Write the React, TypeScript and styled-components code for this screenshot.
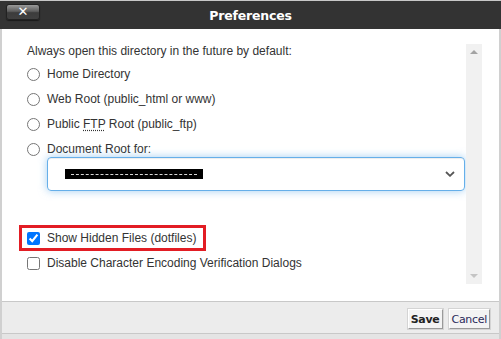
import React, { useState } from "react";
import styled, { createGlobalStyle } from "styled-components";

const GlobalStyle = createGlobalStyle`
  html, body {
    margin: 0;
    padding: 0;
    background: #fff;
  }
  body {
    font-family: "Liberation Sans", Arial, sans-serif;
  }
`;

const Dialog = styled.div`
  width: 501px;
  height: 339px;
  display: flex;
  flex-direction: column;
  background: #e4e4e4;
  box-sizing: border-box;
`;

const Header = styled.div`
  height: 28px;
  border-top: 1px solid #c8c8c8;
  background: #333;
  display: flex;
  align-items: center;
  justify-content: center;
  position: relative;
`;

const Title = styled.h1`
  margin: 0;
  color: #fff;
  font-family: "DejaVu Sans", Verdana, sans-serif;
  font-size: 12.5px;
  font-weight: bold;
  letter-spacing: -0.2px;
`;

const CloseButton = styled.button`
  position: absolute;
  left: 6px;
  top: 3px;
  width: 34px;
  height: 16px;
  padding: 0;
  border: 1px solid #222;
  border-radius: 3px;
  background: linear-gradient(#9a9a9a 0%, #5e5e5e 45%, #3c3c3c 55%, #404040 100%);
  box-shadow: 0 1px 1px rgba(0, 0, 0, 0.5);
  color: #fff;
  font-family: "DejaVu Sans", sans-serif;
  font-weight: bold;
  font-size: 13px;
  line-height: 14px;
  cursor: pointer;
`;

const Frame = styled.div`
  flex: 1;
  display: flex;
  flex-direction: column;
  border-left: 2px solid #d0d0d0;
  border-right: 2px solid #d0d0d0;
`;

const Body = styled.div`
  height: 272px;
  display: flex;
  background: #fff;
`;

const Content = styled.div`
  flex: 1;
  padding: 15px 0 0 25px;
  display: flex;
  flex-direction: column;
  gap: 7px;
  color: #333;
  font-size: 12px;
`;

const Lead = styled.p`
  margin: 0;
  height: 14px;
  line-height: 14px;
`;

const Row = styled.label`
  height: 18px;
  display: flex;
  align-items: center;
  gap: 7px;
  line-height: 14px;
`;

const Radio = styled.input.attrs({ type: "radio" })`
  margin: 0;
  width: 13px;
  height: 13px;
`;

const Check = styled.input.attrs({ type: "checkbox" })`
  margin: 0;
  width: 13px;
  height: 13px;
`;

const Abbr = styled.abbr`
  text-decoration: underline dotted;
  text-underline-offset: 2px;
`;

const DocGroup = styled.div`
  display: flex;
  flex-direction: column;
`;

const SelectBox = styled.div`
  margin: -1px 1px 0 20px;
  height: 34px;
  box-sizing: border-box;
  border: 1px solid #66afe9;
  border-radius: 4px;
  box-shadow: inset 0 1px 1px rgba(0, 0, 0, 0.075), 0 0 8px rgba(102, 175, 233, 0.6);
  display: flex;
  align-items: center;
  justify-content: space-between;
  padding: 0 9px 0 17px;
`;

const Redacted = styled.span`
  width: 138px;
  height: 10px;
  background: #000;
  display: flex;
  align-items: center;
  padding: 0 6px;
  box-sizing: border-box;
  &::after {
    content: "";
    flex: 1;
    border-top: 1px dashed #d8d8d8;
  }
`;

const Spacer = styled.div`
  height: 20px;
`;

const Highlight = styled.div`
  align-self: flex-start;
  margin-left: -8px;
  border: 3px solid #e21d24;
  padding: 1px 7px 1px 5px;
  margin-bottom: -4px;
`;

const ScrollTrack = styled.div`
  width: 16px;
  margin: 15px 17px 17px 0;
  background: #f1f1f1;
  display: flex;
  flex-direction: column;
  justify-content: space-between;
  align-items: center;
  padding: 6px 0;
  box-sizing: border-box;
`;

const Arrow = styled.span<{ $down?: boolean; $color: string }>`
  width: 0;
  height: 0;
  border-left: 4px solid transparent;
  border-right: 4px solid transparent;
  ${(p) =>
    p.$down
      ? `border-top: 4px solid ${p.$color};`
      : `border-bottom: 4px solid ${p.$color};`}
`;

const Footer = styled.div`
  height: 33px;
  border-top: 1px solid #c8c8c8;
  border-bottom: 1px solid #c8c8c8;
  background: #ececec;
  display: flex;
  justify-content: flex-end;
  align-items: flex-start;
  gap: 6px;
  padding: 7px 9px 0 0;
  box-sizing: border-box;
`;

const Button = styled.button<{ $primary?: boolean }>`
  height: 20px;
  padding: 0 2px;
  border: 1px solid;
  border-color: #fff #9a9a9a #9a9a9a #fff;
  outline: 1px solid #d4d4d4;
  background: #f3f3f3;
  color: ${(p) => (p.$primary ? "#222" : "#2a2a5a")};
  font-family: "DejaVu Sans", Tahoma, sans-serif;
  font-size: 11px;
  letter-spacing: -0.3px;
  font-weight: ${(p) => (p.$primary ? "bold" : "normal")};
  cursor: pointer;
`;

export default function App() {
  const [hidden, setHidden] = useState(true);
  const [noEnc, setNoEnc] = useState(false);

  return (
    <>
      <GlobalStyle />
      <Dialog>
        <Header>
          <CloseButton aria-label="Close">✕</CloseButton>
          <Title>Preferences</Title>
        </Header>
        <Frame>
          <Body>
            <Content>
              <Lead>Always open this directory in the future by default:</Lead>
              <Row>
                <Radio name="dir" />
                Home Directory
              </Row>
              <Row>
                <Radio name="dir" />
                Web Root (public_html or www)
              </Row>
              <Row>
                <Radio name="dir" />
                <span>
                  Public <Abbr title="File Transfer Protocol">FTP</Abbr> Root (public_ftp)
                </span>
              </Row>
              <DocGroup>
                <Row>
                  <Radio name="dir" />
                  Document Root for:
                </Row>
                <SelectBox>
                  <Redacted />
                  <svg width="10" height="6" viewBox="0 0 10 6">
                    <path d="M1 1 L5 4.8 L9 1" fill="none" stroke="#555" strokeWidth="1.8" />
                  </svg>
                </SelectBox>
              </DocGroup>
              <Spacer />
              <Highlight>
                <Row>
                  <Check checked={hidden} onChange={() => setHidden(!hidden)} />
                  Show Hidden Files (dotfiles)
                </Row>
              </Highlight>
              <Row>
                <Check checked={noEnc} onChange={() => setNoEnc(!noEnc)} />
                Disable Character Encoding Verification Dialogs
              </Row>
            </Content>
            <ScrollTrack>
              <Arrow $color="#a3a3a3" />
              <Arrow $down $color="#c4c4c4" />
            </ScrollTrack>
          </Body>
          <Footer>
            <Button $primary>Save</Button>
            <Button>Cancel</Button>
          </Footer>
        </Frame>
      </Dialog>
    </>
  );
}
